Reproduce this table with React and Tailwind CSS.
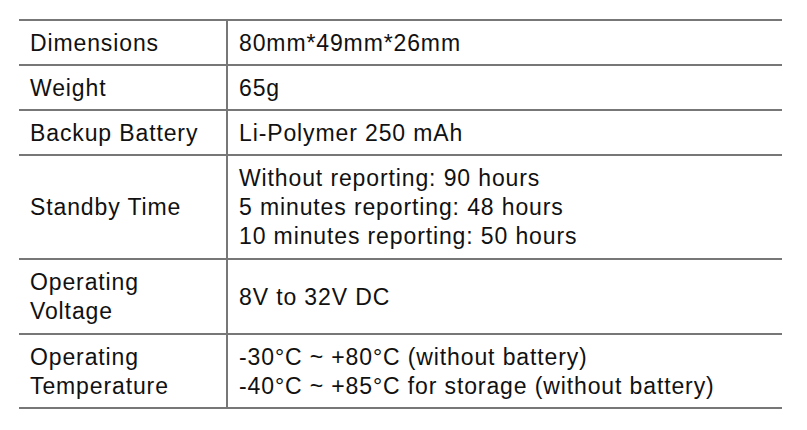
import React from "react";

const rows = [
  { label: ["Dimensions"], value: ["80mm*49mm*26mm"], h: "h-[45px]" },
  { label: ["Weight"], value: ["65g"], h: "h-[45px]" },
  { label: ["Backup Battery"], value: ["Li-Polymer 250 mAh"], h: "h-[45px]" },
  {
    label: ["Standby Time"],
    value: [
      "Without reporting: 90 hours",
      "5 minutes reporting: 48 hours",
      "10 minutes reporting: 50 hours",
    ],
    h: "h-[104px]",
  },
  { label: ["Operating", "Voltage"], value: ["8V to 32V DC"], h: "h-[75px]" },
  {
    label: ["Operating", "Temperature"],
    value: [
      "-30°C ~ +80°C (without battery)",
      "-40°C ~ +85°C for storage (without battery)",
    ],
    h: "h-[74px]",
  },
];

const Lines = ({ lines }) => (
  <div>
    {lines.map((l, i) => (
      <div key={i}>{l}</div>
    ))}
  </div>
);

const App = () => {
  return (
    <div
      className="min-h-[430px] bg-white pt-[19px] pl-[19px] text-[23px] leading-[29px] tracking-[0.88px] text-[#111111]"
      style={{ fontFamily: '"Liberation Sans", Arial, sans-serif' }}
    >
      <div className="w-[763px] border-b-2 border-[#777777]">
        {rows.map((row, i) => (
          <div
            key={i}
            className={`flex border-t-2 border-[#777777] ${row.h}`}
          >
            <div className="flex w-[209px] items-center border-r-2 border-[#777777] pl-[11px] pt-px">
              <Lines lines={row.label} />
            </div>
            <div className="flex flex-1 items-center pl-[11px] pt-px">
              <Lines lines={row.value} />
            </div>
          </div>
        ))}
      </div>
    </div>
  );
};

export default App;
